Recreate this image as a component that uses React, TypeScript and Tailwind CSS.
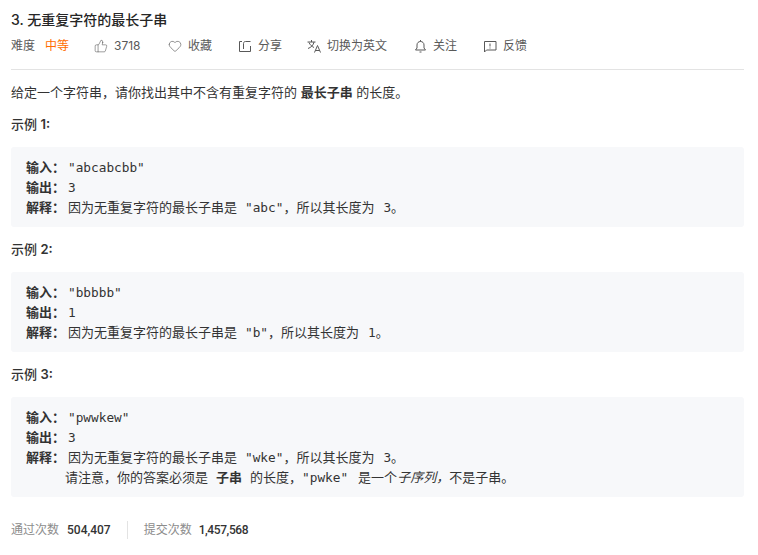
import { ThumbsUp, Heart } from "lucide-react";
import type { ReactNode } from "react";

const sans = '"Inter", "Noto Sans CJK SC", sans-serif';

function ShareIcon() {
  return (
    <svg width="14" height="14" viewBox="0 0 14 14" fill="none" stroke="currentColor" strokeWidth="1">
      <path d="M4 2.5H1.5V12.5H12.5V7" />
      <path d="M5.5 10V4.5C5.5 3.4 6.2 2.5 7.5 2.5H12.5" />
    </svg>
  );
}

function TranslateIcon() {
  return (
    <svg width="14" height="14" viewBox="0 0 14 14" fill="none" stroke="currentColor" strokeWidth="1">
      <path d="M0.5 3H8.5M4.5 1V3M7 3C6.5 6 4 8.5 1 9.5M2 3.5C3 6 5 7.5 7 8.5" />
      <path d="M7.5 13.5L10.5 6.5L13.5 13.5M8.5 11.5H12.5" />
    </svg>
  );
}

function BellIcon() {
  return (
    <svg width="13" height="14" viewBox="0 0 13 14" fill="none" stroke="currentColor" strokeWidth="1">
      <path d="M1.5 11H11.5L10 9V6C10 3.8 8.5 2.5 6.5 2.5S3 3.8 3 6V9Z" />
      <path d="M6.5 1V2.5M5.5 13H7.5" />
    </svg>
  );
}

function FeedbackIcon() {
  return (
    <svg width="13" height="13" viewBox="0 0 13 13" fill="none" stroke="currentColor" strokeWidth="1">
      <path d="M0.5 12V1.5H12V10H2.5Z" />
      <path d="M6 3.5V6.5M6 7.5V8.5" />
    </svg>
  );
}

function Meta({ icon, label, className }: { icon: ReactNode; label: string; className: string }) {
  return (
    <div className={`flex items-center gap-[6px] ${className}`}>
      {icon}
      <span>{label}</span>
    </div>
  );
}

function Code({ children, className = "" }: { children: ReactNode; className?: string }) {
  return <span className={`text-[12.75px] font-['DejaVu_Sans_Mono','Noto_Sans_CJK_SC',monospace] ${className}`}>{children}</span>;
}

function Row({ label, children }: { label: string; children: ReactNode }) {
  return (
    <div className="h-5 whitespace-pre">
      <b className="inline-block w-[42px] font-semibold text-[#333]">{label}</b>
      {children}
    </div>
  );
}

function Example({ num, input, output, sub, extra }: { num: number; input: string; output: string; sub: string; extra?: boolean }) {
  return (
    <section>
      <p className="text-[13px] leading-5 font-medium text-[#333]">
        示例 <span className="font-semibold">{num}:</span>
      </p>
      <div className="mt-[13px] rounded-[3px] bg-[#f7f8fa] px-[15px] py-[10px] text-[13px] leading-5 text-[#333]">
        <Row label="输入："><Code>{input}</Code></Row>
        <Row label="输出："><Code>{output}</Code></Row>
        <Row label="解释：">
          因为无重复字符的最长子串是<Code className="ml-[8px]">{sub}</Code>，所以其长度为<Code className="ml-[9px]">{output}</Code>。
        </Row>
        {extra && (
          <div className="h-5 whitespace-pre pl-[39px]">
            请注意，你的答案必须是<b className="mx-[8px] font-semibold text-[#333]">子串</b>的长度，<Code>"pwke"</Code><span className="ml-[10px]">是一个</span><i>子序列，</i>不是子串。
          </div>
        )}
      </div>
    </section>
  );
}

export default function App() {
  return (
    <div className="min-h-screen bg-white pl-[11px] pr-[14px] pt-[10px]" style={{ fontFamily: sans }}>
      <h1 className="text-[14px] leading-[20px] font-medium text-[#262626]">3. 无重复字符的最长子串</h1>

      <div className="mt-[6px] flex h-[20px] items-center text-[12px] text-[#595959]">
        <span className="w-[34px]">难度</span>
        <span className="w-[49px] text-[#ff6d00]">中等</span>
        <Meta className="w-[74px]" icon={<ThumbsUp size={14} strokeWidth={1} />} label="3718" />
        <Meta className="w-[70px]" icon={<Heart size={14} strokeWidth={1.1} />} label="收藏" />
        <Meta className="w-[69px]" icon={<ShareIcon />} label="分享" />
        <Meta className="w-[107px]" icon={<TranslateIcon />} label="切换为英文" />
        <Meta className="w-[70px]" icon={<BellIcon />} label="关注" />
        <Meta icon={<FeedbackIcon />} label="反馈" />
      </div>

      <div className="mt-[13px] h-px bg-[#e3e3e3]" />

      <p className="mt-[12px] text-[13px] leading-5 text-[#333] whitespace-pre">
        给定一个字符串，请你找出其中不含有重复字符的 <b className="font-semibold text-[#333]">最长子串</b> 的长度。
      </p>

      <div className="mt-[12px] flex flex-col gap-[12px]">
        <Example num={1} input={'"abcabcbb"'} output="3" sub={'"abc"'} />
        <Example num={2} input={'"bbbbb"'} output="1" sub={'"b"'} />
        <Example num={3} input={'"pwwkew"'} output="3" sub={'"wke"'} extra />
      </div>

      <div className="mt-[23px] flex h-[20px] items-center text-[12px]">
        <span className="text-[#8c8c8c]">通过次数</span>
        <span className="ml-[8px] font-['Roboto'] font-medium text-[#333]">504,407</span>
        <span className="mx-[16px] h-[18px] w-px bg-[#e3e3e3]" />
        <span className="text-[#8c8c8c]">提交次数</span>
        <span className="ml-[7px] font-['Roboto'] font-medium tracking-[-0.4px] text-[#333]">1,457,568</span>
      </div>
    </div>
  );
}
